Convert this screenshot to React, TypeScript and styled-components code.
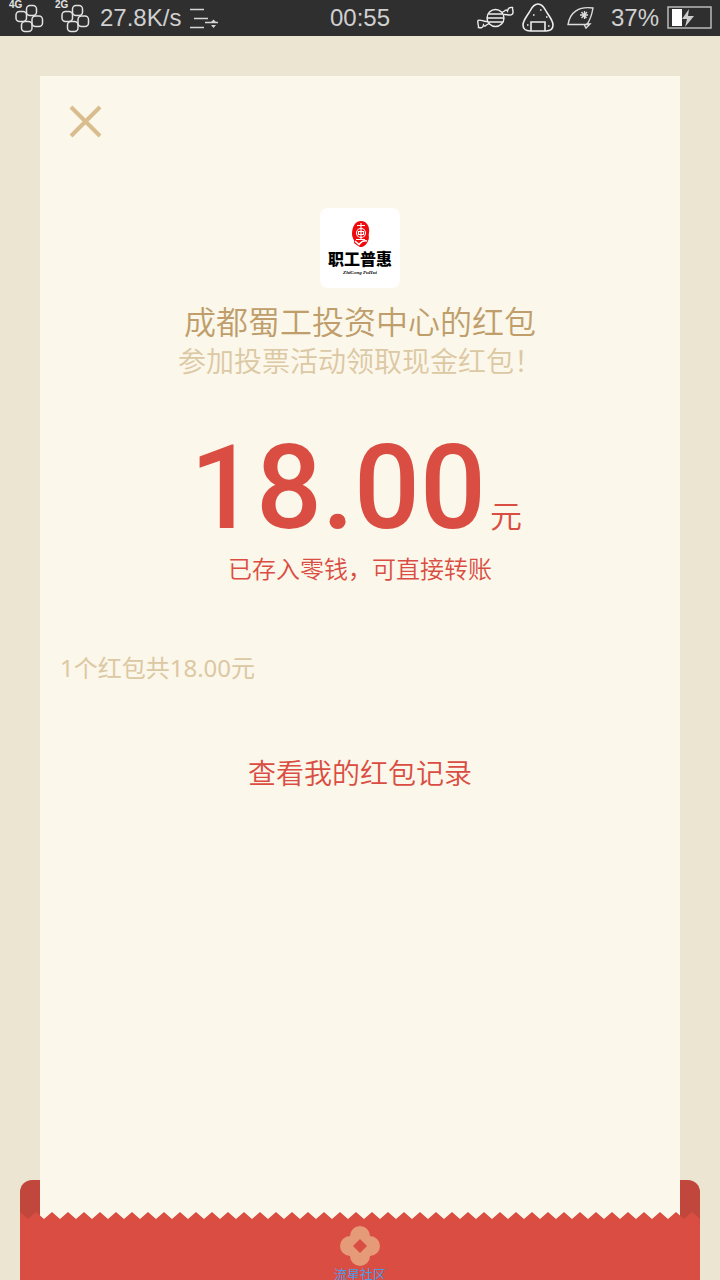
import React from 'react';
import styled, { createGlobalStyle } from 'styled-components';

const GlobalStyle = createGlobalStyle`
  *, *::before, *::after { box-sizing: border-box; }
  body {
    margin: 0;
    background: #ece5d1;
    font-family: 'Noto Sans CJK SC', sans-serif;
    font-weight: 350;
  }
  svg { display: block; flex-shrink: 0; }
`;

const Page = styled.div`
  display: flex;
  flex-direction: column;
  min-height: 100vh;
`;

const StatusBar = styled.header`
  display: grid;
  grid-template-columns: 1fr auto 1fr;
  align-items: center;
  height: 36px;
  padding: 0 8px;
  background: #2f2f2f;
  color: #d0d0d0;
  font-family: 'Liberation Sans', sans-serif;
  font-size: 24px;
  line-height: 36px;
  white-space: nowrap;
`;

const StatusGroup = styled.div<{ $end?: boolean }>`
  display: flex;
  align-items: center;
  justify-content: ${(p) => (p.$end ? 'flex-end' : 'flex-start')};
  gap: 8px;
`;

const BatteryLevel = styled.span`
  margin-left: 8px;
`;

const Sheet = styled.main`
  position: relative;
  z-index: 1;
  flex: 1;
  display: flex;
  flex-direction: column;
  align-items: center;
  margin: 40px 40px 0;
  padding: 28px 20px 60px;
  background: #fbf7ea;
`;

const CloseButton = styled.button`
  align-self: flex-start;
  margin-left: 8px;
  padding: 0;
  border: 0;
  background: none;
  cursor: pointer;
`;

const Avatar = styled.div`
  display: flex;
  width: 80px;
  height: 80px;
  margin-top: 68px;
  border-radius: 8px;
  background: #fff;
`;

const Sender = styled.h1`
  margin: 12px 0 0;
  color: #bf9e6b;
  font-size: 32px;
  font-weight: 350;
  line-height: 40px;
`;

const Wish = styled.p`
  margin: 0;
  color: #dcc8a3;
  font-size: 28px;
  line-height: 40px;
`;

const Amount = styled.p`
  display: flex;
  align-items: baseline;
  gap: 4px;
  margin: 48px 0 0;
  padding-right: 8px;
  color: #da4d42;
  font-size: 32px;
  line-height: 40px;
`;

const Figure = styled.strong`
  font-family: Roboto, sans-serif;
  font-size: 116px;
  font-weight: 500;
  line-height: 120px;
`;

const RedLink = styled.a<{ $large?: boolean }>`
  margin-top: ${(p) => (p.$large ? '64px' : '0')};
  color: #da4d42;
  font-size: ${(p) => (p.$large ? '28px' : '24px')};
  line-height: 40px;
  text-decoration: none;
`;

const Summary = styled.p`
  align-self: flex-start;
  margin: 60px 0 0;
  color: #dcc8a3;
  font-family: 'Noto Sans', 'Noto Sans CJK SC', sans-serif;
  font-size: 24px;
  font-weight: 400;
  line-height: 40px;
`;

const Envelope = styled.footer`
  height: 100px;
  margin: -40px 20px 0;
  padding-top: 32px;
  border-radius: 12px 12px 0 0;
  background: #c1473d;
`;

const Pocket = styled.div`
  position: relative;
  z-index: 2;
  height: 68px;
  overflow: hidden;
`;

const PocketFill = styled.div`
  display: flex;
  flex-direction: column;
  align-items: center;
  height: 61px;
  padding-top: 7px;
  background: #da4d42;
`;

const Watermark = styled.span`
  color: #4a9be8;
  font-size: 13px;
  font-weight: 400;
  line-height: 16px;
`;

const Blocks = ({ label }: { label: string }) => (
  <svg width="38" height="36" viewBox="0 0 38 36" fill="none" stroke="#e2e2e2" strokeWidth="1.5">
    <text x="1" y="8" fill="#e2e2e2" stroke="none" fontFamily="Liberation Sans, sans-serif" fontWeight="700" fontSize="10">{label}</text>
    <rect x="18.500" y="5.500" width="10" height="10" rx="3.500" />
    <rect x="8" y="11.500" width="10.500" height="10" rx="3.500" />
    <rect x="24" y="16" width="10.500" height="10.500" rx="3.500" />
    <rect x="13.500" y="21.500" width="10.500" height="10" rx="3.500" />
  </svg>
);

const SpeedIcon = () => (
  <svg width="30" height="36" viewBox="0 0 30 36" stroke="#d6d6d6" strokeWidth="1.5" fill="#d6d6d6">
    <path d="M1 9.500H15M5 18.500H19M1 27.500H15M16 22.500H29" />
    <path d="M24.500 19.500L27 22H22ZM24.500 28L22 25H27Z" stroke="none" />
  </svg>
);

const CandyIcon = () => (
  <svg width="38" height="36" viewBox="0 0 38 36" fill="none" stroke="#eee" strokeWidth="1.4">
    <circle cx="19.500" cy="18" r="8.500" />
    <path d="M12.500 14H26.500M11 18H28M12.500 22H26.500" />
    <path d="M26 12.500L28.500 11C30 10 30 9 31.500 11C32 8 34 7 36.500 7.500C36 9 38 11 36.500 14C34 16.500 31 14 27.500 14.500" />
    <path d="M13 23.500L10.500 25C9 26 9 27 7.500 25C7 28 5 28 2.500 27.500C3 26 1 23 2 20.500C5 19 7 22 11.500 21.500" />
  </svg>
);

const RiceIcon = () => (
  <svg width="32" height="36" viewBox="1 0 32 36" fill="none" stroke="#eee" strokeWidth="1.6">
    <path d="M17 4C21 4 23 7 25 11C27 15 32 20 32 25C32 29 29 31 25 31H9C5 31 2 29 2 25C2 20 7 15 9 11C11 7 13 4 17 4ZM10 31V22H24V31" />
    <path d="M19 10H20.500M12 15H13.500M25 17H26.500M6 25H7.500M27 26H28.500" />
  </svg>
);

const FanIcon = () => (
  <svg width="33" height="36" viewBox="-5 0 33 36" fill="none" stroke="#ddd" strokeWidth="1.4">
    <path d="M1 24.500C3 12 12 6 26 8C25 14 23 20 20 24.500H1ZM17 24.500L19 28L23 24H19" />
    <path d="M13 15H21M14.500 12L19.500 18M20 12L14.500 18M17.500 11V19" strokeWidth="1.3" />
  </svg>
);

const BatteryIcon = () => (
  <svg width="45" height="36" viewBox="0 0 45 36">
    <rect x="1" y="7" width="43" height="21" fill="none" stroke="#bbb" strokeWidth="1.5" />
    <rect x="5" y="9" width="10" height="17" fill="#fff" />
    <path d="M22 9L15 19H20L18 27L27 16H21Z" fill="#ccc" />
  </svg>
);

const Emblem = () => (
  <svg width="80" height="80" viewBox="0 0 80 80">
    <path d="M41 13C47 13 50 19 49 25C48 28 50 29 48 33C46 37 44 39 40 39C37 38 36 36 34 35C35 32 32 30 32 26C32 19 35 13 41 13Z" fill="#ee0a0c" />
    <g fill="none" stroke="#fff" strokeWidth="1.1">
      <circle cx="41" cy="25" r="4.500" />
      <path d="M37 17.500H45M41 15V31M38.500 23.500H43.500V26.500H38.500ZM36 31.500H45" />
      <path d="M35 33L39 36.500C41 34 44 32 47 33" strokeWidth="1.6" />
    </g>
    <text x="40" y="57" textAnchor="middle" fontFamily="Noto Sans CJK SC, sans-serif" fontSize="16" fontWeight="900">职工普惠</text>
    <text x="40" y="66" textAnchor="middle" fontFamily="Liberation Serif, serif" fontStyle="italic" fontWeight="700" fontSize="5">ZhiGong PuHui</text>
  </svg>
);

const Zigzag = () => (
  <svg width="100%" height="7" aria-hidden="true">
    <defs>
      <pattern id="teeth" width="16" height="7" patternUnits="userSpaceOnUse">
        <path d="M0 0L8 7L16 0V7H0Z" fill="#da4d42" />
      </pattern>
    </defs>
    <rect width="100%" height="7" fill="url(#teeth)" />
  </svg>
);

const Flower = () => (
  <svg width="40" height="40" viewBox="0 0 40 40">
    <g fill="#e59a78">
      <circle cx="20" cy="10" r="10" />
      <circle cx="10" cy="20" r="10" />
      <circle cx="30" cy="20" r="10" />
      <circle cx="20" cy="30" r="10" />
    </g>
    <path d="M20 13L27 20L20 27L13 20Z" fill="#da4d42" />
  </svg>
);

export default function App() {
  return (
    <Page>
      <GlobalStyle />
      <StatusBar>
        <StatusGroup>
          <Blocks label="4G" />
          <Blocks label="2G" />
          <span>27.8K/s</span>
          <SpeedIcon />
        </StatusGroup>
        <span>00:55</span>
        <StatusGroup $end>
          <CandyIcon />
          <RiceIcon />
          <FanIcon />
          <BatteryLevel>37%</BatteryLevel>
          <BatteryIcon />
        </StatusGroup>
      </StatusBar>
      <Sheet>
        <CloseButton type="button" aria-label="关闭">
          <svg width="36" height="36" viewBox="0 0 36 36" stroke="#d9bd8f" strokeWidth="4">
            <path d="M3 3L32 32M32 3L3 32" />
          </svg>
        </CloseButton>
        <Avatar><Emblem /></Avatar>
        <Sender>成都蜀工投资中心的红包</Sender>
        <Wish>参加投票活动领取现金红包！</Wish>
        <Amount><Figure>18.00</Figure><span>元</span></Amount>
        <RedLink href="#balance">已存入零钱，可直接转账</RedLink>
        <Summary>1个红包共18.00元</Summary>
        <RedLink href="#records" $large>查看我的红包记录</RedLink>
      </Sheet>
      <Envelope>
        <Pocket>
          <Zigzag />
          <PocketFill>
            <Flower />
            <Watermark>流星社区</Watermark>
          </PocketFill>
        </Pocket>
      </Envelope>
    </Page>
  );
}
